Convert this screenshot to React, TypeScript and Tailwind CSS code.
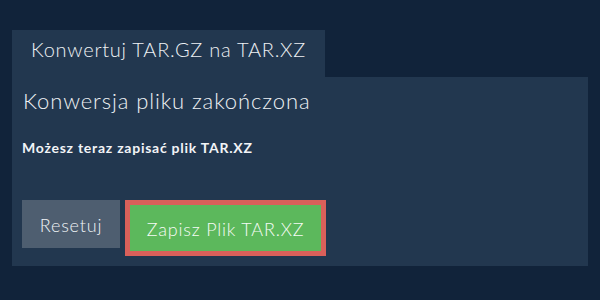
import React from "react";

export default function App() {
  return (
    <div className="w-[600px] h-[300px] bg-[#11233a] pt-[30px] px-[12px]" style={{ fontFamily: "Lato, 'Noto Sans', sans-serif" }}>
      <div className="flex">
        <div className="h-[47px] w-[313px] bg-[#22374f] pt-[7px] text-center text-[20px] leading-[24px] tracking-[0.75px] text-[#eef1f4] font-light">
          Konwertuj TAR.GZ na TAR.XZ
        </div>
      </div>
      <div className="bg-[#22374f] w-[576px] h-[189px] pt-[11px] px-[10px] pb-[10px] flex flex-col">
        <div className="text-[22px] leading-[26px] tracking-[0.9px] text-[#eef1f4] pl-[1px] font-light">Konwersja pliku zakończona</div>
        <div className="mt-[25px] text-[14px] leading-[17px] tracking-[0.75px] font-bold text-[#f2f4f7]">Możesz teraz zapisać plik TAR.XZ</div>
        <div className="mt-auto flex items-start gap-[5px]">
          <button className="h-[48px] w-[98px] pt-[2px] bg-[#4e5e70] text-[#f0f3f6] text-[18px] tracking-[0.8px] font-light flex items-center justify-center">
            Resetuj
          </button>
          <button className="h-[56px] w-[201px] pt-[2px] border-[5px] border-[#d9605a] bg-[#5cb85c] text-[#f6fbf6] text-[18px] tracking-[0.8px] font-light flex items-center justify-center">
            Zapisz Plik TAR.XZ
          </button>
        </div>
      </div>
    </div>
  );
}
